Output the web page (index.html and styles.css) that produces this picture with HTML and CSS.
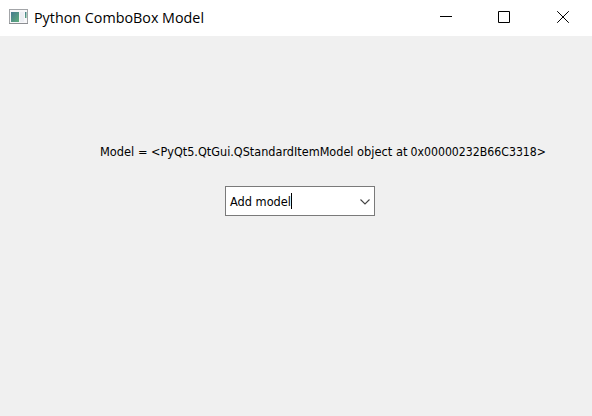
FILE: index.html
```html
<!DOCTYPE html>
<html lang="en">
<head>
<meta charset="utf-8">
<title>Python ComboBox Model</title>
<link rel="stylesheet" href="styles.css">
</head>
<body>
<div class="window">
  <header class="titlebar">
    <svg class="app-icon" width="20" height="16" viewBox="0 0 20 16">
      <defs><linearGradient id="pane" x2="1" y2="1"><stop stop-color="#45798f"/><stop offset="1" stop-color="#5fae7c"/></linearGradient></defs>
      <rect x="0.5" y="0.500" width="18" height="14" fill="#f7f7f9" stroke="#a3a5a8"/>
      <path d="M0 14.500h19" stroke="#8c8e92"/>
      <rect x="2" y="3" width="8" height="10" fill="url(#pane)"/>
      <rect x="11" y="3" width="4" height="10" fill="#eceef3"/>
      <rect x="16" y="3" width="1.500" height="6" fill="url(#pane)"/>
    </svg>
    <h1 class="title"><svg class="text" width="172" height="24"><text x="0" y="17" textLength="170" lengthAdjust="spacingAndGlyphs">Python ComboBox Model</text></svg></h1>
    <div class="controls">
      <svg width="58" height="36" viewBox="0 0 58 36"><path d="M22 16.500h12"/></svg>
      <svg width="58" height="36" viewBox="0 0 58 36"><path d="M22.500 11.500h11v11h-11z"/></svg>
      <svg width="58" height="36" viewBox="0 0 58 36"><path d="M23.200 11.200l11.600 11.600M34.800 11.200l-11.600 11.600"/></svg>
    </div>
  </header>
  <main class="content">
    <p class="label"><svg class="text" width="450" height="20"><text y="14" x="0" textLength="47.500" lengthAdjust="spacingAndGlyphs">Model =</text><text y="14" x="51" textLength="202.500" lengthAdjust="spacingAndGlyphs">&lt;PyQt5.QtGui.QStandardItemModel</text><text y="14" x="257" textLength="50.500" lengthAdjust="spacingAndGlyphs">object at</text><text y="14" x="310.500" textLength="135.500" lengthAdjust="spacingAndGlyphs">0x00000232B66C3318&gt;</text></svg></p>
    <div class="combo">
      <svg class="text" width="61" height="20"><text x="0" y="15" textLength="61" lengthAdjust="spacingAndGlyphs">Add model</text></svg>
      <span class="caret"></span>
      <svg class="chevron" width="10" height="6" viewBox="0 0 10 6"><path d="M0.500 0.500l4.500 4.500l4.500-4.500"/></svg>
    </div>
  </main>
</div>
</body>
</html>
```
FILE: styles.css
```css
* { box-sizing: border-box; }
body { margin: 0; background: #f0f0f0; }
.window { width: 592px; height: 416px; background: #f0f0f0; overflow: hidden; }
.titlebar { height: 36px; background: #fff; display: flex; align-items: center; padding-left: 9px; }
.app-icon { flex: none; margin-top: -2px; }
.title { margin: 0 0 0 5px; font: 400 15px "Open Sans", "Noto Sans", sans-serif; height: 24px; }
.text { display: block; overflow: visible; fill: #000; flex: none; }
.controls { display: flex; margin-left: auto; }
.controls svg { fill: none; stroke: #000; stroke-width: 1; display: block; }
.content { padding-top: 106px; }
.label { margin: 0 0 0 100px; height: 20px; font: 12px "DejaVu Sans Condensed", "DejaVu Sans", sans-serif; }
.combo { width: 150px; height: 30px; margin: 24px 0 0 225px; border: 1px solid #7a7a7a; background: #fff; display: flex; align-items: center; padding: 0 4px; font: 12px "DejaVu Sans Condensed", "DejaVu Sans", sans-serif; }
.caret { width: 1px; height: 16px; background: #000; }
.chevron { margin: 1px 0 0 auto; fill: none; stroke: #444; stroke-width: 1.1; overflow: visible; }
```
